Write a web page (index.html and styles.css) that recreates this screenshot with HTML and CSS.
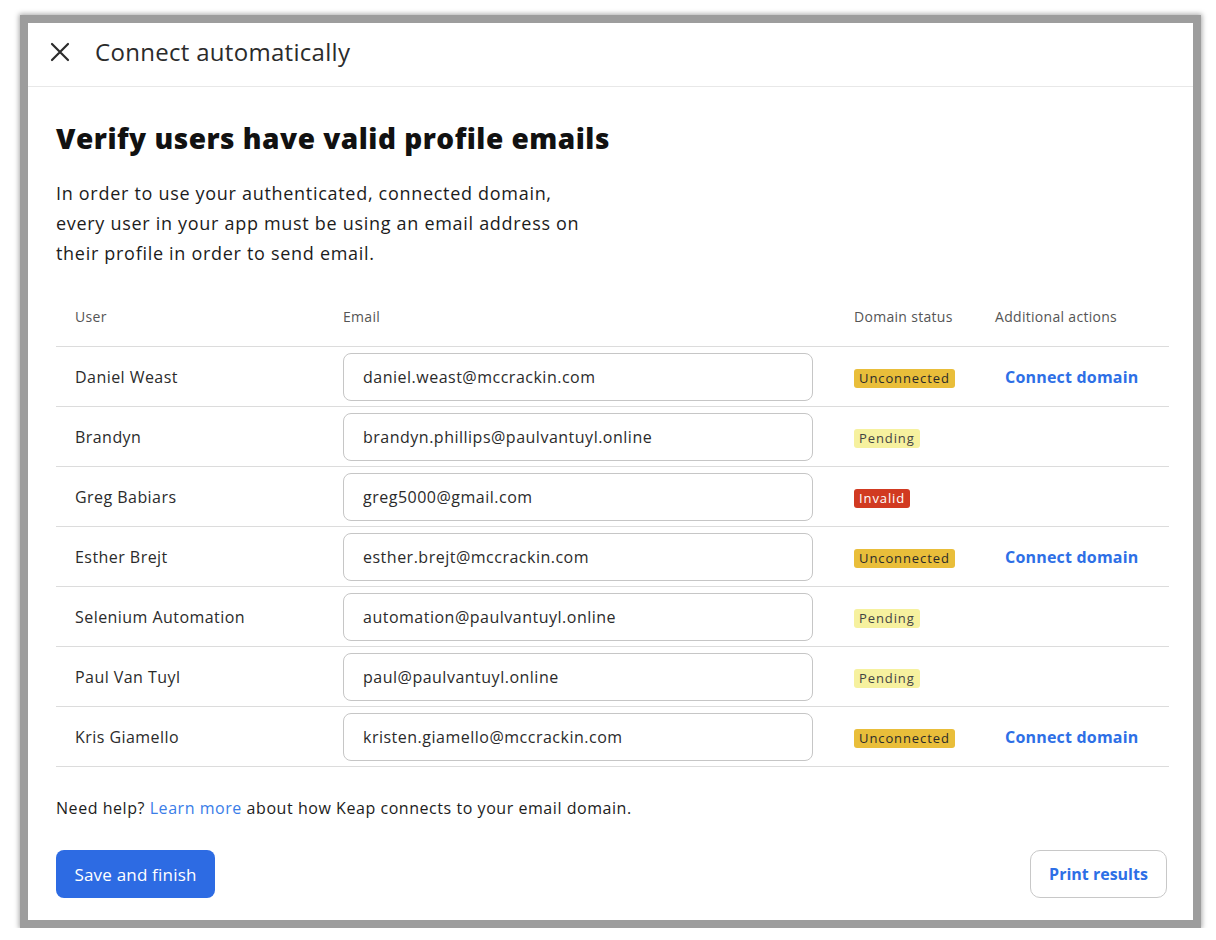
FILE: index.html
```html
<!DOCTYPE html>
<html>
<head>
	<title>Connect automatically</title>
	<link rel="stylesheet" href="styles.css">
</head>
<body>

	<div class="dialog">
		<div class="dialog-header">
			<svg class="close-icon" width="20" height="20" viewBox="0 0 20 20">
				<path d="M2 2 L18 18 M18 2 L2 18" stroke="#2b2b2b" stroke-width="2.2" stroke-linecap="round" fill="none"/>
			</svg>
			<span class="dialog-title">Connect automatically</span>
		</div>

		<div class="dialog-body">
			<h1>Verify users have valid profile emails</h1>
			<p class="intro">In order to use your authenticated, connected domain,<br>every user in your app must be using an email address on<br>their profile in order to send email.</p>

			<table class="users">
				<thead>
					<tr>
						<th class="col-user">User</th>
						<th class="col-email">Email</th>
						<th class="col-status">Domain status</th>
						<th class="col-actions">Additional actions</th>
					</tr>
				</thead>
				<tbody>
					<tr>
						<td>Daniel Weast</td>
						<td><input type="text" value="daniel.weast@mccrackin.com"></td>
						<td><span class="badge unconnected">Unconnected</span></td>
						<td><a class="connect" href="#">Connect domain</a></td>
					</tr>
					<tr>
						<td>Brandyn</td>
						<td><input type="text" value="brandyn.phillips@paulvantuyl.online"></td>
						<td><span class="badge pending">Pending</span></td>
						<td></td>
					</tr>
					<tr>
						<td>Greg Babiars</td>
						<td><input type="text" value="greg5000@gmail.com"></td>
						<td><span class="badge invalid">Invalid</span></td>
						<td></td>
					</tr>
					<tr>
						<td>Esther Brejt</td>
						<td><input type="text" value="esther.brejt@mccrackin.com"></td>
						<td><span class="badge unconnected">Unconnected</span></td>
						<td><a class="connect" href="#">Connect domain</a></td>
					</tr>
					<tr>
						<td>Selenium Automation</td>
						<td><input type="text" value="automation@paulvantuyl.online"></td>
						<td><span class="badge pending">Pending</span></td>
						<td></td>
					</tr>
					<tr>
						<td>Paul Van Tuyl</td>
						<td><input type="text" value="paul@paulvantuyl.online"></td>
						<td><span class="badge pending">Pending</span></td>
						<td></td>
					</tr>
					<tr>
						<td>Kris Giamello</td>
						<td><input type="text" value="kristen.giamello@mccrackin.com"></td>
						<td><span class="badge unconnected">Unconnected</span></td>
						<td><a class="connect" href="#">Connect domain</a></td>
					</tr>
				</tbody>
			</table>

			<p class="help">Need help? <a href="#">Learn more</a> about how Keap connects to your email domain.</p>

			<div class="actions">
				<button class="btn primary">Save and finish</button>
				<button class="btn secondary">Print results</button>
			</div>
		</div>
	</div>

</body>
</html>
```

FILE: styles.css
```css
html {
	background: #fff;
}

body {
	margin: 0;
	padding: 15px 0 0 20px;
	font-family: "Open Sans", "Noto Sans", sans-serif;
	color: #222;
}

.dialog {
	width: 1165px;
	height: 897px;
	background: #fff;
	border: 8px solid #9d9d9d;
	box-shadow: 0 0 5px 1px #a8a8a8;
	display: flex;
	flex-direction: column;
}

.dialog-header {
	height: 57px;
	padding-bottom: 6px;
	border-bottom: 1px solid #e8e8e8;
	display: flex;
	align-items: center;
	padding-left: 22px;
}

.close-icon {
	margin-right: 25px;
}

.dialog-title {
	font-size: 24px;
	letter-spacing: 0.3px;
	color: #2b2b2b;
}

.dialog-body {
	padding: 32px 26px 0 28px;
}

h1 {
	margin: 0;
	font-size: 28px;
	font-weight: 800;
	letter-spacing: 0.5px;
	color: #111;
	line-height: 38px;
}

.intro {
	margin: 21px 0 0;
	font-size: 18px;
	line-height: 30px;
	color: #1c1c1c;
	letter-spacing: 0.7px;
}

.users {
	margin-top: 19px;
	width: 1111px;
	border-collapse: collapse;
	table-layout: fixed;
}

.users th {
	height: 59px;
	text-align: left;
	font-size: 14px;
	font-weight: 400;
	color: #555;
	border-bottom: 1px solid #dcdcdc;
	padding: 0 0 0 19px;
	letter-spacing: 0.3px;
}

.col-user { width: 248px; }
.col-email { width: 491px; }
.col-status { width: 121px; }
.col-actions { width: 174px; }

.users th.col-email,
.users th.col-status,
.users th.col-actions {
	padding-left: 20px;
}

.users td {
	height: 59px;
	padding: 0 0 0 19px;
	font-size: 16px;
	letter-spacing: 0.45px;
	color: #2b2b2b;
	border-bottom: 1px solid #dcdcdc;
}

.users td + td {
	padding-left: 20px;
}

.users input {
	width: 470px;
	height: 48px;
	box-sizing: border-box;
	border: 1px solid #c6c6c6;
	border-radius: 8px;
	padding: 0 0 0 19px;
	font-family: inherit;
	font-size: 16px;
	letter-spacing: 0.5px;
	color: #2b2b2b;
	background: #fff;
}

.badge {
	display: inline-block;
	font-size: 13px;
	line-height: 19px;
	padding: 0 5px;
	border-radius: 3px;
	letter-spacing: 0.9px;
}

.unconnected {
	background: #e9be3a;
	color: #2a2a2a;
}

.pending {
	background: #f6f19f;
	color: #444;
}

.invalid {
	background: #d13a21;
	color: #fff;
}

.connect {
	display: inline-block;
	margin-left: 10px;
	color: #2d6fe6;
	font-weight: 700;
	font-size: 16px;
	text-decoration: none;
	letter-spacing: 0.2px;
}

.help {
	margin: 30px 0 0;
	font-size: 16px;
	color: #1c1c1c;
	letter-spacing: 0.55px;
}

.help a {
	color: #3a7de8;
	text-decoration: none;
}

.actions {
	margin-top: 31px;
	display: flex;
	justify-content: space-between;
}

.btn {
	height: 48px;
	border-radius: 8px;
	font-family: inherit;
	font-size: 17px;
	padding: 0;
	cursor: pointer;
}

.primary {
	background: #2d6be3;
	color: #fff;
	border: none;
	width: 159px;
	letter-spacing: 0.2px;
}

.secondary {
	background: #fff;
	border: 1px solid #c8c8c8;
	border-radius: 10px;
	color: #2d6fe6;
	font-size: 16px;
	font-weight: 700;
	width: 137px;
}
```
